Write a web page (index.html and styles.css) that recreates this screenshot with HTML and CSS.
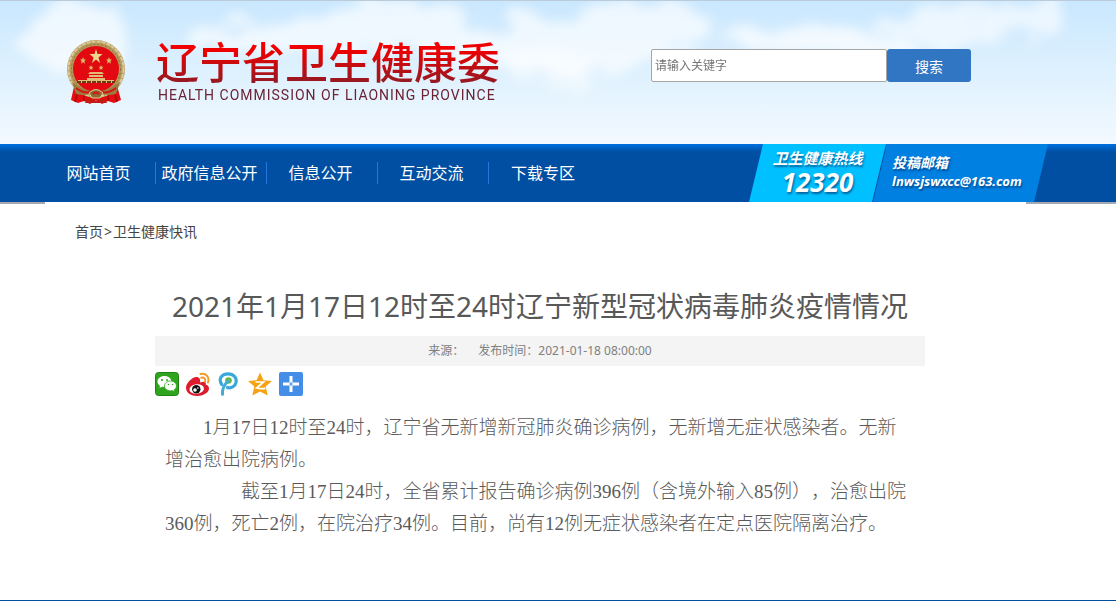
FILE: index.html
```html
<!DOCTYPE html>
<html lang="zh-CN">
<head>
  <meta charset="UTF-8">
  <meta name="viewport" content="width=device-width, initial-scale=1.0">
  <title>2021年1月17日12时至24时辽宁新型冠状病毒肺炎疫情情况</title>
  <link rel="stylesheet" href="styles.css">
</head>
<body>
  <header class="header">
    <svg class="sky" viewBox="0 0 1116 144" preserveAspectRatio="none" aria-hidden="true">
      <defs>
        <linearGradient id="skyFill" x1="0" y1="0" x2="0" y2="1">
          <stop offset="0" stop-color="#c9e7fe"/>
          <stop offset=".5" stop-color="#def1fe"/>
          <stop offset="1" stop-color="#f3f9ff"/>
        </linearGradient>
        <filter id="soft" x="-20%" y="-20%" width="140%" height="140%">
          <feTurbulence type="fractalNoise" baseFrequency=".025 .04" numOctaves="3" seed="4" result="noise"/>
          <feDisplacementMap in="SourceGraphic" in2="noise" scale="45" xChannelSelector="R" yChannelSelector="G"/>
          <feGaussianBlur stdDeviation="6"/>
        </filter>
      </defs>
      <rect width="1116" height="144" fill="url(#skyFill)"/>
      <g fill="#fff" filter="url(#soft)">
        <path opacity=".65" d="M20 60Q15 25 45 10Q90-10 125 15Q145 45 120 70Q70 65 20 60Z"/>
        <path opacity=".65" d="M180 45Q200 18 250 25Q300 30 320 8Q360-12 450 5Q475 20 472 36Q510 35 520 5Q545 8 570 25Q600 5 640 8Q680-5 708 12Q715 35 690 50Q600 70 540 80Q470 60 400 48Q300 60 180 45Z"/>
        <path opacity=".7" d="M720 45Q735 30 765 36Q790 18 820 32Q860 20 890 38Q930 42 915 55Q820 65 720 45Z"/>
        <path opacity=".6" d="M870 25Q930 0 1000 8Q1040-5 1070 8Q1050 35 1000 46Q940 50 870 25Z"/>
        <ellipse opacity=".4" cx="550" cy="68" rx="45" ry="18"/>
      </g>
      <rect width="1116" height="1" fill="#bccbd8"/>
    </svg>
    <div class="container header-inner">
      <a class="logo" href="#">
        <svg class="emblem" viewBox="0 0 60 64" aria-hidden="true">
          <path d="M9 42L5 60l7 3 6-2 6 3 6-4 6 4 6-3 6 2 7-3-5-18z" fill="#e50b10"/>
          <path d="M12 50l-3 12M18 53v8M48 50l3 12M42 53v8" stroke="#a50b08" stroke-width="1.5"/>
          <circle cx="30" cy="29" r="29" fill="#b59a5c"/>
          <circle cx="30" cy="29" r="27.500" fill="none" stroke="#dccb9b" stroke-width="2" stroke-dasharray="4 1"/>
          <circle cx="30" cy="29" r="24.500" fill="none" stroke="#8a7040" stroke-width="1" stroke-dasharray="2 2"/>
          <circle cx="30" cy="29" r="23" fill="#e20a10"/>
          <path d="M30 9l1.500 5h5l-4 3.500 1.500 5.500-4-3.500-4 3.500 1.500-5.500-4-3.500h5z" fill="#f0d58c"/>
          <path d="M17 17l1 2.500h2l-1.600 1.700.6 2.600-2-1.500-2 1.500.6-2.600-1.600-1.700h2zM43 17l1 2.500h2l-1.600 1.700.6 2.600-2-1.500-2 1.500.6-2.600-1.600-1.700h2zM25 25l.7 1.800h1.800l-1.400 1.300.5 2-1.600-1.200-1.600 1.200.5-2-1.400-1.300h1.800zM35 25l.7 1.800h1.800l-1.400 1.300.5 2-1.600-1.200-1.600 1.200.5-2-1.400-1.300h1.800z" fill="#dcb768"/>
          <path d="M24 32h12l2 2H22zM23 35h14v2H23zM21 38h18v2H21zM12 40h36v3H12z" fill="#e1bd76"/>
          <path d="M11 42h38" stroke="#6d3a18" stroke-width="2" stroke-dasharray="4 1"/>
          <path d="M6 42q11 8 19 9 5-4 10 0 8-1 19-9l-4 12q-9 2-14 0l-6-2-6 2q-5 2-14 0z" fill="#9b7c40"/>
          <path d="M10 48q8 6 15 4M50 48q-8 6-15 4" fill="none" stroke="#d61210" stroke-width="2"/>
          <path d="M23 53q7-7 14 0l-3 5h-8z" fill="#8b6a35" stroke="#e4cd90"/>
          <path d="M27 54q3-3 6 0" fill="none" stroke="#d61210" stroke-width="2"/>
          <path d="M22 58q8 5 16 0l3 5H19z" fill="#c31a12"/>
        </svg>
        <span class="logo-text">
          <span class="logo-cn">辽宁省卫生健康委</span>
          <span class="logo-en">HEALTH COMMISSION OF LIAONING PROVINCE</span>
        </span>
      </a>
      <form class="search">
        <input class="search-input" type="text" placeholder="请输入关键字" aria-label="请输入关键字">
        <button class="search-btn" type="button">搜索</button>
      </form>
    </div>
  </header>

  <div class="navbar">
    <div class="container navbar-inner">
      <nav class="nav">
        <a href="#">网站首页</a>
        <a href="#">政府信息公开</a>
        <a href="#">信息公开</a>
        <a href="#">互动交流</a>
        <a href="#">下载专区</a>
      </nav>
      <div class="contact">
        <div class="hotline">
          <span class="hotline-title">卫生健康热线</span>
          <span class="hotline-num">12320</span>
        </div>
        <div class="mailbox">
          <span class="mail-title">投稿邮箱</span>
          <span class="mail-addr">lnwsjswxcc@163.com</span>
        </div>
      </div>
    </div>
  </div>

  <main class="container main">
    <div class="crumbs"><a href="#">首页</a><span>&gt;</span><a href="#">卫生健康快讯</a></div>
    <article class="article">
      <h1>2021年1月17日12时至24时辽宁新型冠状病毒肺炎疫情情况</h1>
      <div class="meta"><span>来源：</span><span>发布时间：2021-01-18 08:00:00</span></div>
      <div class="share">
        <a href="#" aria-label="微信">
          <svg viewBox="0 0 24 24">
            <rect x=".5" y=".5" width="23" height="23" rx="3" fill="#2fa51e" stroke="#238217"/>
            <path d="M9.500 4C5.400 4 2.500 6.500 2.500 9.600c0 1.800 1 3.300 2.500 4.300L4.500 16l2.600-1.300c4.500 1.300 9.300-1 9.300-5.100C16.400 6.500 13.600 4 9.500 4z" fill="#fff"/>
            <path d="M15.500 9c-3.500 0-6 2.200-6 5 0 3.400 4 5.600 7.700 4.600l2.300 1.200-.5-1.900c1.600-1 2.500-2.400 2.500-3.900 0-2.800-2.600-5-6-5z" fill="#fff" stroke="#2fa51e" stroke-width=".8"/>
            <g fill="#2fa51e"><circle cx="7" cy="8" r="1"/><circle cx="12" cy="8" r="1"/><circle cx="13.500" cy="12.500" r=".8"/><circle cx="17.500" cy="12.500" r=".8"/></g>
          </svg>
        </a>
        <a href="#" aria-label="新浪微博">
          <svg viewBox="0 0 24 24">
            <path d="M9.500 5c-3.500.5-9.500 6-9.500 11C0 21 5.500 24 11 24c6 0 12-3.300 12-7.500 0-2.200-1.500-3.300-3.300-3.900.8-2.500-.8-4-5.700-2.100.8-3.700-1-6-4.500-5.500z" fill="#dc1c2c"/>
            <ellipse cx="10.700" cy="17" rx="7.300" ry="4.800" fill="#fff" transform="rotate(-8 10.700 17)"/>
            <circle cx="10.300" cy="17.200" r="4.200" fill="#111"/>
            <circle cx="9" cy="18" r="1.800" fill="#fff"/><circle cx="11.900" cy="16" r=".8" fill="#fff"/>
            <path d="M14.500 2c5-1.500 9.500 3 7.500 8.500M15.300 5.700c2.700-.7 4.500 1.300 3.700 4" fill="none" stroke="#f29b28" stroke-width="2" stroke-linecap="round"/>
          </svg>
        </a>
        <a href="#" aria-label="腾讯微博">
          <svg viewBox="0 0 24 24">
            <path d="M4.800 12.500C.8 6.500 5 1.800 11 1.800c6 0 9 4.500 8 8.700-.8 4-5 6.300-8.500 5" fill="none" stroke="#38a8dc" stroke-width="3.200" stroke-linecap="round"/>
            <circle cx="11.500" cy="8.500" r="3.300" fill="#64ba46"/>
            <path d="M11 9C7 13 5 17 5.500 22.300" fill="none" stroke="#40acd5" stroke-width="3" stroke-linecap="round"/>
          </svg>
        </a>
        <a href="#" aria-label="QQ空间">
          <svg viewBox="0 0 24 24">
            <path d="M12 .5l3.500 7.700 8.500.9-6.300 5.500 2 9L12 19.500l-7.700 4.100 2-9L0 9.100l8.500-.9z" fill="#f5a315"/>
            <path d="M7.500 10h8l-7 6q4 1 9 .3" fill="none" stroke="#fff" stroke-width="1.700"/>
          </svg>
        </a>
        <a href="#" aria-label="更多分享">
          <svg viewBox="0 0 24 24">
            <rect width="24" height="24" rx="2" fill="#458ee8"/>
            <path d="M12 4v16M4 12h16" stroke="#fff" stroke-width="3"/>
            <path d="M12 10v4M10 12h4" stroke="#458ee8" stroke-width="1"/>
          </svg>
        </a>
      </div>
      <div class="content">
        <p>1月17日12时至24时，辽宁省无新增新冠肺炎确诊病例，无新增无症状感染者。无新增治愈出院病例。</p>
        <p class="deep">截至1月17日24时，全省累计报告确诊病例396例（含境外输入85例），治愈出院360例，死亡2例，在院治疗34例。目前，尚有12例无症状感染者在定点医院隔离治疗。</p>
      </div>
    </article>
  </main>

  <footer class="footer"></footer>
</body>
</html>
```
FILE: styles.css
```css
* {
  box-sizing: border-box;
  margin: 0;
  padding: 0;
}

body {
  font-family: "Noto Sans", "Noto Sans CJK SC", sans-serif;
  font-size: 14px;
  color: #444;
  background: #fff;
}

a {
  color: inherit;
  text-decoration: none;
}

.container {
  max-width: 1026px;
  margin: 0 auto;
}

/* header */
.header {
  position: relative;
  height: 144px;
}

.sky {
  position: absolute;
  width: 100%;
  height: 100%;
}

.header-inner {
  position: relative;
  display: flex;
  justify-content: space-between;
  align-items: flex-start;
  padding: 40px 100px 0 21px;
}

.logo {
  display: flex;
  gap: 30px;
}

.emblem {
  width: 60px;
  height: 64px;
}

.logo-text {
  display: flex;
  flex-direction: column;
}

.logo-cn {
  font-size: 43px;
  line-height: 46px;
  font-weight: 500;
  color: transparent;
  background: linear-gradient(#f00000 20%, #8c1c26);
  -webkit-background-clip: text;
  background-clip: text;
}

.logo-en {
  padding-left: 2px;
  font-family: Roboto, "Liberation Sans", sans-serif;
  font-size: 14px;
  line-height: 18px;
  letter-spacing: 1px;
  color: #6b2233;
}

.search {
  display: flex;
  padding-top: 9px;
}

.search-input {
  width: 236px;
  height: 33px;
  padding: 0 3px;
  border: 1px solid #a5a5a5;
  border-radius: 2px;
  font-family: inherit;
  font-size: 12px;
  background: #fff;
}

.search-input::placeholder {
  color: #757575;
}

.search-btn {
  width: 84px;
  height: 33px;
  border: 0;
  border-radius: 3px;
  font-family: inherit;
  font-size: 14px;
  color: #fff;
  background: #3176c3;
  cursor: pointer;
}

/* nav */
.navbar {
  background: linear-gradient(#0070e0, #004fa2 8px);
  border-bottom: 2px solid #a4a9b2;
}

.navbar-inner {
  display: flex;
  justify-content: space-between;
  padding-right: 23px;
}

.nav {
  display: flex;
  align-items: center;
}

.nav a {
  width: 111px;
  height: 22px;
  padding-right: 3px;
  line-height: 22px;
  font-size: 16px;
  text-align: center;
  white-space: nowrap;
  color: #fff;
  border-right: 1px solid #2676dc;
}

.nav a:last-child {
  border-right: 0;
}

.contact {
  display: flex;
  height: 58px;
  font-style: italic;
  font-weight: 700;
  color: #fff;
  text-shadow: 1px 2px 2px rgba(0, 40, 100, 0.6);
}

.hotline,
.mailbox {
  display: flex;
  flex-direction: column;
}

.hotline {
  width: 137px;
  padding-top: 3px;
  align-items: center;
  background: #00c0ff;
  clip-path: polygon(14px 0, 100% 0, 123px 100%, 0 100%);
}

.hotline-title {
  font-size: 15px;
  line-height: 22px;
}

.hotline-num {
  font-size: 26px;
  line-height: 26px;
}

.mailbox {
  width: 176px;
  margin-left: -14px;
  padding: 10px 0 0 20px;
  background: #0080e0;
  clip-path: polygon(15px 0, 100% 0, 162px 100%, 1px 100%);
}

.mail-title {
  font-size: 14px;
  line-height: 18px;
}

.mail-addr {
  font-size: 13px;
  line-height: 18px;
}

/* article */
.main {
  position: relative;
  margin-top: -2px;
  padding: 20px 0 60px 30px;
  background: linear-gradient(#fff, #fff) no-repeat;
  background-size: calc(100% - 45px) 100%;
}

.crumbs {
  line-height: 20px;
}

.crumbs span {
  padding: 0 1px;
}

.article {
  max-width: 850px;
  padding: 46px 0 0 80px;
}

.article h1 {
  font-size: 28px;
  line-height: 36px;
  font-weight: 400;
  text-align: center;
  color: #585858;
}

.meta {
  display: flex;
  justify-content: center;
  gap: 14px;
  margin-top: 12px;
  line-height: 30px;
  font-size: 12px;
  color: #808080;
  background: #f4f4f4;
}

.share {
  display: flex;
  gap: 7px;
  padding-top: 6px;
}

.share a,
.share svg {
  display: block;
  width: 24px;
  height: 24px;
}

.content {
  margin-top: 16px;
  padding: 0 10px;
  font-family: "Liberation Serif", "Noto Sans CJK SC", serif;
  font-size: 19px;
  line-height: 32px;
  font-weight: 300;
  text-spacing-trim: space-all;
  color: #5a5a5a;
}

.content p {
  text-indent: 2em;
}

.content .deep {
  text-indent: 4em;
}

.footer {
  border-top: 1px solid #00509f;
}
```
